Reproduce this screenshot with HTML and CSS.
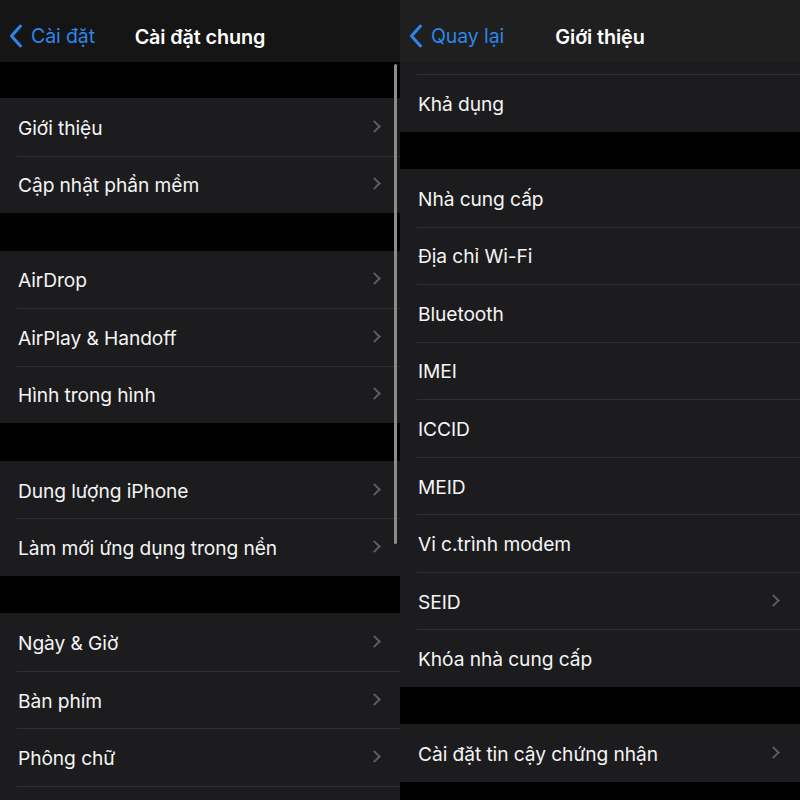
FILE: index.html
```html
<!DOCTYPE html>
<html lang="vi">
<head>
<meta charset="utf-8">
<link rel="stylesheet" href="styles.css">
</head>
<body>
<div class="screen">
  <section class="panel left">
    <header class="nav nav-dark">
      <a class="back"><svg class="back-ico" viewBox="0 0 14 24"><path d="M11.5 2 L2.5 12 L11.5 22"/></svg><span>Cài đặt</span></a>
      <h1 class="title">Cài đặt chung</h1>
    </header>
    <div class="gap first"></div>
    <div class="group">
      <div class="row"><span>Giới thiệu</span><i class="chev"></i></div>
      <div class="row"><span>Cập nhật phần mềm</span><i class="chev"></i></div>
    </div>
    <div class="gap"></div>
    <div class="group">
      <div class="row"><span>AirDrop</span><i class="chev"></i></div>
      <div class="row"><span>AirPlay &amp; Handoff</span><i class="chev"></i></div>
      <div class="row"><span>Hình trong hình</span><i class="chev"></i></div>
    </div>
    <div class="gap"></div>
    <div class="group">
      <div class="row"><span>Dung lượng iPhone</span><i class="chev"></i></div>
      <div class="row"><span>Làm mới ứng dụng trong nền</span><i class="chev"></i></div>
    </div>
    <div class="gap"></div>
    <div class="group">
      <div class="row"><span>Ngày &amp; Giờ</span><i class="chev"></i></div>
      <div class="row"><span>Bàn phím</span><i class="chev"></i></div>
      <div class="row"><span>Phông chữ</span><i class="chev"></i></div>
      <div class="row"></div>
    </div>
    <div class="scrollbar"></div>
  </section>
  <section class="panel right">
    <header class="nav nav-light">
      <a class="back"><svg class="back-ico" viewBox="0 0 14 24"><path d="M11.5 2 L2.5 12 L11.5 22"/></svg><span>Quay lại</span></a>
      <h1 class="title">Giới thiệu</h1>
    </header>
    <div class="group">
      <div class="row stub"></div>
      <div class="row"><span>Khả dụng</span></div>
    </div>
    <div class="gap"></div>
    <div class="group">
      <div class="row"><span>Nhà cung cấp</span></div>
      <div class="row"><span>Địa chỉ Wi-Fi</span></div>
      <div class="row"><span>Bluetooth</span></div>
      <div class="row"><span>IMEI</span></div>
      <div class="row"><span>ICCID</span></div>
      <div class="row"><span>MEID</span></div>
      <div class="row"><span>Vi c.trình modem</span></div>
      <div class="row"><span>SEID</span><i class="chev"></i></div>
      <div class="row"><span>Khóa nhà cung cấp</span></div>
    </div>
    <div class="gap"></div>
    <div class="group">
      <div class="row"><span>Cài đặt tin cậy chứng nhận</span><i class="chev"></i></div>
    </div>
    <div class="gap"></div>
  </section>
</div>
</body>
</html>
```
FILE: styles.css
```css
* { box-sizing: border-box; margin: 0; padding: 0; }
html, body { width: 800px; height: 800px; background: #000; overflow: hidden; }
body { font-family: Inter, "Noto Sans", "Liberation Sans", sans-serif; color: #fff; }
.screen { display: flex; width: 800px; height: 800px; }
.panel { position: relative; width: 400px; height: 800px; overflow: hidden; background: #000; display: flex; flex-direction: column; }
.nav { flex: 0 0 62px; height: 62px; position: relative; display: flex; align-items: center; justify-content: center; }
.nav-dark { background: #151515; }
.nav-light { background: #1f1f1f; z-index: 2; }
.title { font-size: 19.8px; font-weight: 600; letter-spacing: -0.1px; color: #fff; margin-top: 12px; }
.back { position: absolute; left: 9px; top: 24px; display: flex; align-items: center; gap: 8px; color: #2d86e8; font-size: 19.5px; letter-spacing: -0.1px; }
.back-ico { width: 14px; height: 24px; }
.back-ico path { fill: none; stroke: #2d86e8; stroke-width: 3; stroke-linecap: round; stroke-linejoin: round; }
.gap { flex: 0 0 37.5px; }
.gap.first { flex-basis: 36px; }
.group { background: #1c1c1e; flex: 0 0 auto; }
.row { position: relative; height: 57.55px; display: flex; align-items: center; padding-left: 18px; padding-top: 2px; font-size: 19.2px; letter-spacing: -0.08px; color: #f4f4f4; }
.row + .row::before { content: ""; position: absolute; left: 17px; right: 0; top: 0; height: 1px; background: #2e2e30; }
.row.stub { height: 12px; padding-top: 0; }
.chev { position: absolute; right: 21px; top: 50%; width: 9px; height: 9px; margin-top: -5px; border-right: 2px solid #5e5e62; border-top: 2px solid #5e5e62; transform: rotate(45deg); }
.right .chev { right: 22px; }
.scrollbar { position: absolute; left: 394px; top: 64px; width: 3px; height: 480px; border-radius: 2px; background: #8c8c8c; }
```
